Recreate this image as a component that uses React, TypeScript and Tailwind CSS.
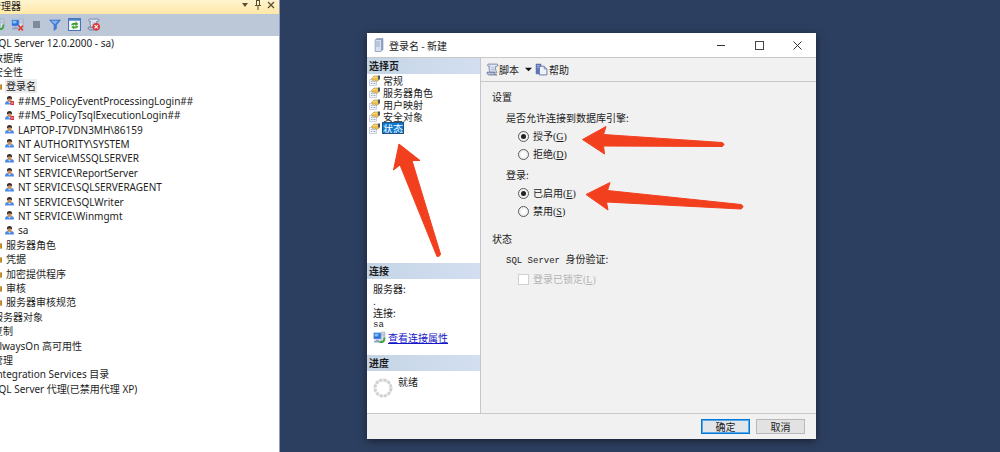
import { useState } from 'react';
import type { ReactNode } from 'react';
import clsx from 'clsx';

type TreeItem = {
  label: string;
  level: 1 | 2 | 3;
  locked?: boolean;
  selected?: boolean;
};

const treeItems: TreeItem[] = [
  { label: 'SQL Server 12.0.2000 - sa)', level: 1 },
  { label: '数据库', level: 1 },
  { label: '安全性', level: 1 },
  { label: '登录名', level: 2, selected: true },
  { label: '##MS_PolicyEventProcessingLogin##', level: 3, locked: true },
  { label: '##MS_PolicyTsqlExecutionLogin##', level: 3, locked: true },
  { label: 'LAPTOP-I7VDN3MH\\86159', level: 3 },
  { label: 'NT AUTHORITY\\SYSTEM', level: 3 },
  { label: 'NT Service\\MSSQLSERVER', level: 3 },
  { label: 'NT SERVICE\\ReportServer', level: 3 },
  { label: 'NT SERVICE\\SQLSERVERAGENT', level: 3 },
  { label: 'NT SERVICE\\SQLWriter', level: 3 },
  { label: 'NT SERVICE\\Winmgmt', level: 3 },
  { label: 'sa', level: 3 },
  { label: '服务器角色', level: 2 },
  { label: '凭据', level: 2 },
  { label: '加密提供程序', level: 2 },
  { label: '审核', level: 2 },
  { label: '服务器审核规范', level: 2 },
  { label: '服务器对象', level: 1 },
  { label: '复制', level: 1 },
  { label: 'AlwaysOn 高可用性', level: 1 },
  { label: '管理', level: 1 },
  { label: 'Integration Services 目录', level: 1 },
  { label: 'SQL Server 代理(已禁用代理 XP)', level: 1 },
];

const pages = ['常规', '服务器角色', '用户映射', '安全对象', '状态'];

function UserIcon({ locked }: { locked?: boolean }) {
  return (
    <svg viewBox="0 0 18 18" className="h-[9px] w-[9px] shrink-0">
      <path d="M0 17c0-5 2-7 5-7h7c4 0 6 2 6 7z" fill="#4a8ae6" />
      <path d="M5 10l4 5 4-5z" fill="#dcebff" />
      <path d="M5 5h8v4c0 2-2 3-4 3s-4-1-4-3z" fill="#c98f5c" />
      <path d="M4 7c-1-5 2-7 5-7s6 2 5 7c-2-3-7-3-10 0z" fill="#3a2a26" />
      {locked && <path d="M11 10h7v8h-7z" fill="#dd3340" />}
      {locked && <path d="M12.500 14h4" stroke="#fff" strokeWidth="1.500" />}
    </svg>
  );
}

function FolderIcon() {
  return (
    <svg viewBox="0 0 16 16" className="h-2 w-2 shrink-0">
      <path d="M0 2h6l2 3h8v10H0z" fill="#a06f14" />
      <path d="M0 6h15v8H0z" fill="#c8942c" />
    </svg>
  );
}

function PageIcon() {
  return (
    <svg viewBox="0 0 22 22" className="h-[11px] w-[11px] shrink-0">
      <path d="M1 9h14v12H1z" fill="#f3f5fb" stroke="#a3abc0" />
      <path d="M4 13h3M9 13h4M4 17h3M9 17h4" stroke="#8593b8" strokeWidth="1.500" />
      <path d="M5 7l5-5h8l2 3v5l-5 3-3-3-5 1z" fill="#ecc04a" stroke="#a67c22" />
      <path d="M8 6l5-2 3 1" fill="none" stroke="#fff0b0" strokeWidth="1.500" />
      <path d="M18 1h4v8h-4z" fill="#4d5a70" />
    </svg>
  );
}

function ServerLinkIcon({ failed }: { failed?: boolean }) {
  return (
    <svg viewBox="0 0 24 24" className="h-[13px] w-[13px] shrink-0">
      <path d="M15 2h7v17h-7z" fill="#dbe2ee" stroke="#8592ab" />
      <path d="M16 6h5M16 9h5" stroke="#8592ab" />
      <path d="M1 3h14v12H1z" fill="#2f6fd4" stroke="#c9d8f2" />
      <path d="M3 5h7v5H3z" fill="#7cc0ff" />
      <path d="M5 16h6v2h3v3H2v-3h3z" fill="#93a4c0" />
      {failed ? (
        <path d="M14 14l8 9M22 14l-8 9" stroke="#e23a26" strokeWidth="3" />
      ) : (
        <path d="M12 20c6 2 9-1 9-8" fill="none" stroke="#3aa53c" strokeWidth="3.500" />
      )}
    </svg>
  );
}

function ScriptIcon({ stop }: { stop?: boolean }) {
  return (
    <svg viewBox="0 0 24 24" className="h-[13px] w-[13px] shrink-0">
      <path d="M5 2h15c3 0 3 4 0 4h-2c-1 5 0 8 2 12H8C6 13 4 9 7 6H5C2 6 2 2 5 2z" fill="#dde5f4" stroke="#6a7896" strokeWidth="1.500" />
      <path d="M2 17h13c0 3 2 5 5 5H6c-3 0-4-2-4-5z" fill="#b4c3de" stroke="#5f6f92" strokeWidth="1.500" />
      <path d="M9 9h7M9 12h7M10 15h7" stroke="#93a3c6" />
      {stop && <circle cx="17" cy="16" r="7" fill="#de3b38" />}
      {stop && <path d="M14 13l6 6M20 13l-6 6" stroke="#fff" strokeWidth="2" />}
    </svg>
  );
}

function IconButton({ label, children }: { label: string; children: ReactNode }) {
  return (
    <button type="button" aria-label={label} className="flex h-4 w-4 items-center justify-center">
      {children}
    </button>
  );
}

function TreeRow({ item }: { item: TreeItem }) {
  return (
    <li
      className={clsx(
        'flex min-h-0 items-center whitespace-nowrap',
        item.level === 1 && '-ml-[7px]',
        item.level === 2 && '-ml-[6px] gap-[3px]',
        item.level === 3 && 'ml-[5px] gap-1'
      )}
    >
      {item.level === 2 && <FolderIcon />}
      {item.level === 3 && <UserIcon locked={item.locked} />}
      <span className={clsx('leading-[14px]', item.level === 2 && 'px-px', item.selected && 'bg-[#ececec]')}>
        {item.label}
      </span>
    </li>
  );
}

function ObjectExplorer() {
  return (
    <aside className="w-[280px] shrink-0 overflow-hidden border-r border-[#8e9bbc] bg-white font-['Noto_Sans','Noto_Sans_CJK_SC',sans-serif] text-[10px] text-[#1e1e1e]">
      <header className="flex h-[14px] items-center justify-between bg-linear-to-b from-[#fff4d0] to-[#ffe8a6] pr-[2px]">
        <h2 className="-ml-[9px] -mt-[3px] leading-[14px]">管理器</h2>
        <div className="-mt-1 flex text-[#5b4f33]">
          <button type="button" aria-label="窗口位置" className="flex h-3 w-[13px] items-center justify-center">
            <svg viewBox="0 0 8 8" className="h-2 w-2"><path d="M1 2h6L4 6z" fill="currentColor" /></svg>
          </button>
          <button type="button" aria-label="自动隐藏" className="flex h-3 w-[13px] items-center justify-center">
            <svg viewBox="0 0 8 10" className="h-[10px] w-2" fill="none" stroke="currentColor">
              <path d="M2.500 0v5.500M5.500 0v5.500M2 .5h4M1 5.500h6M4 6v4" />
            </svg>
          </button>
          <button type="button" aria-label="关闭" className="flex h-3 w-[13px] items-center justify-center">
            <svg viewBox="0 0 8 8" className="h-2 w-2" stroke="currentColor" strokeWidth="1.300"><path d="M1 1l6 6M7 1L1 7" /></svg>
          </button>
        </div>
      </header>
      <div className="flex h-[22px] items-center gap-[3px] bg-[#bcc7d8] pb-px">
        <div className="-ml-[10px] flex">
          <IconButton label="连接"><ServerLinkIcon /></IconButton>
        </div>
        <IconButton label="断开连接"><ServerLinkIcon failed /></IconButton>
        <IconButton label="停止"><span className="h-[7px] w-[7px] bg-[#808997]" /></IconButton>
        <IconButton label="筛选器">
          <svg viewBox="0 0 24 24" className="h-3 w-3">
            <path d="M1 2h22l-8 10v7l-5 4V12z" fill="#3f7de0" stroke="#3566b8" />
            <path d="M4 3.500h14l-6 7z" fill="#86b4f6" />
          </svg>
        </IconButton>
        <IconButton label="刷新">
          <svg viewBox="0 0 24 24" className="h-[13px] w-[13px]">
            <path d="M1 1h22v22H1z" fill="#fbfdff" stroke="#4872b8" strokeWidth="2" />
            <path d="M1 1h22v4H1z" fill="#4b7dcb" />
            <path d="M6 14c0-5 4-6 8-5V6l5 5-5 4v-2c-3-1-5 0-8 1z" fill="#3d9c33" />
            <path d="M19 14c0 5-4 6-8 5v2l-5-4 5-4v2c3 1 5 0 8-1z" fill="#56ad45" />
          </svg>
        </IconButton>
        <IconButton label="脚本错误"><ScriptIcon stop /></IconButton>
      </div>
      <ul className="grid h-[360px] auto-rows-fr">
        {treeItems.map((item) => (
          <TreeRow key={item.label} item={item} />
        ))}
      </ul>
    </aside>
  );
}

function SectionHeader({ children }: { children: ReactNode }) {
  return (
    <h3 className="h-4 shrink-0 bg-linear-to-r from-[#c5d5e6] to-[#d3dff0] pl-[2px] font-bold leading-4">{children}</h3>
  );
}

function Key({ char }: { char: string }) {
  return (
    <span className="font-['Liberation_Serif',serif]">
      (<u>{char}</u>)
    </span>
  );
}

type RadioProps = {
  name: string;
  label: string;
  char: string;
  checked: boolean;
  onChange: () => void;
};

function Radio({ name, label, char, checked, onChange }: RadioProps) {
  return (
    <label className="flex h-[18px] items-center gap-1 pl-[26px]">
      <input
        type="radio"
        name={name}
        checked={checked}
        onChange={onChange}
        className="h-[11px] w-[11px] appearance-none rounded-full border border-[#5a5a5a] bg-white bg-clip-content p-[2px] checked:bg-[#222222]"
      />
      <span>
        {label}
        <Key char={char} />
      </span>
    </label>
  );
}

function PageSidebar({ page, onSelect }: { page: string; onSelect: (page: string) => void }) {
  return (
    <nav className="flex w-[114px] shrink-0 flex-col border-r border-[#c4c8ce] bg-white">
      <SectionHeader>选择页</SectionHeader>
      <ul className="flex-1">
        {pages.map((name) => (
          <li key={name} className="flex h-3 items-center pl-[2px]">
            <PageIcon />
            <button
              type="button"
              onClick={() => onSelect(name)}
              className={clsx(
                'ml-[2px] h-3 px-px leading-[11px]',
                name === page && 'bg-[#0a78d6] text-white outline-1 -outline-offset-1 outline-[#28507c]'
              )}
            >
              {name}
            </button>
          </li>
        ))}
      </ul>
      <SectionHeader>连接</SectionHeader>
      <div className="flex h-[76px] flex-col pl-[6px] pt-1 leading-3">
        <p>服务器:</p>
        <p>.</p>
        <p>连接:</p>
        <p className="font-['Liberation_Mono',monospace] text-[9px]">sa</p>
        <div className="flex items-center gap-[2px]">
          <ServerLinkIcon />
          <a href="#properties" className="text-[#1414c8] underline">
            查看连接属性
          </a>
        </div>
      </div>
      <SectionHeader>进度</SectionHeader>
      <div className="flex h-[42px] items-start gap-[5px] pl-[6px] pt-[5px]">
        <svg viewBox="0 0 20 20" className="mt-[2px] h-5 w-5">
          <circle cx="10" cy="10" r="8" fill="none" stroke="#d2d2d2" strokeWidth="3" strokeDasharray="3.400 .8" />
        </svg>
        <span className="leading-3">就绪</span>
      </div>
    </nav>
  );
}

function Arrows() {
  return (
    <svg viewBox="0 0 449 406" className="pointer-events-none absolute left-0 top-0 h-[406px] w-[449px]" fill="#f2401f" stroke="#f2401f" strokeLinejoin="round">
      <path d="M32 111L53 127.500H45L73.500 221Q73 224 70 223.500L33 132L26.500 137z" />
      <path d="M215.500 106.500L239 93.500L236.500 101.500L355 109.500Q359 111.500 355 113.500L236.500 113L237.500 121z" />
      <path d="M219 161.500L243 149.500L240.500 157.500L374 171.500Q378 173.500 374 176L239.500 169L241 177z" />
    </svg>
  );
}

function LoginDialog() {
  const [page, setPage] = useState('状态');
  const [connect, setConnect] = useState('grant');
  const [login, setLogin] = useState('enabled');

  return (
    <section
      role="dialog"
      aria-label="登录名 - 新建"
      className="relative mb-[13px] ml-[87px] mr-[184px] mt-[33px] flex min-w-0 flex-1 flex-col bg-[#f1f1f1] font-['Noto_Sans_CJK_SC',sans-serif] text-[10px] text-[#1c1c1c] shadow-[0_2px_8px_rgba(0,0,0,0.5)]"
    >
      <header className="flex h-6 shrink-0 items-center bg-white pl-[7px]">
        <svg viewBox="0 0 20 28" className="h-[14px] w-[10px]">
          <path d="M2 4l4-3h12v22l-4 4H2z" fill="#8fa3c4" stroke="#74859f" />
          <path d="M3 4h11v22H3z" fill="#d5e0f0" />
          <path d="M4 8h8M4 12h8M4 16h8" stroke="#8da0c0" strokeWidth="1.500" />
        </svg>
        <h1 className="ml-[5px] flex-1">登录名 - 新建</h1>
        <button type="button" aria-label="最小化" className="flex h-6 w-[38px] items-center justify-center">
          <span className="h-px w-2 bg-[#333333]" />
        </button>
        <button type="button" aria-label="最大化" className="flex h-6 w-[38px] items-center justify-center">
          <span className="h-[9px] w-[9px] border border-[#444444]" />
        </button>
        <button type="button" aria-label="关闭" className="flex h-6 w-[38px] items-center justify-center">
          <svg viewBox="0 0 9 9" className="h-[9px] w-[9px]" stroke="#333333"><path d="M.5.5l8 8M8.500.5l-8 8" /></svg>
        </button>
      </header>

      <div className="flex min-h-0 flex-1 border-y border-[#c8c8c8]">
        <PageSidebar page={page} onSelect={setPage} />
        <main className="flex-1">
          <div className="flex h-6 items-center border-b border-[#c8c8c8] pl-[5px]">
            <button type="button" className="flex items-center">
              <ScriptIcon />
              脚本
              <svg viewBox="0 0 8 8" className="ml-[6px] h-[7px] w-[7px]"><path d="M0 2h8L4 6z" fill="#111" /></svg>
            </button>
            <button type="button" className="ml-[3px] flex items-center gap-px">
              <svg viewBox="0 0 24 24" className="h-[13px] w-[13px]">
                <path d="M2 2h9v18H2z" fill="#5f78c0" stroke="#3f5590" />
                <path d="M4 5h5M4 8h3" stroke="#c6d2f2" strokeWidth="1.500" />
                <path d="M8 6h9l5 5v11H8z" fill="#eef2fb" stroke="#51639a" strokeWidth="1.500" />
                <path d="M17 6v5h5" fill="#b8c6e8" stroke="#51639a" />
              </svg>
              帮助
            </button>
          </div>
          <div className="pl-[11px] pt-[7px] leading-4">
            <h2>设置</h2>
            <fieldset className="mt-[5px]">
              <legend className="mb-px pl-[14px]">是否允许连接到数据库引擎:</legend>
              <Radio name="connect" label="授予" char="G" checked={connect === 'grant'} onChange={() => setConnect('grant')} />
              <Radio name="connect" label="拒绝" char="D" checked={connect === 'deny'} onChange={() => setConnect('deny')} />
            </fieldset>
            <fieldset className="mt-1">
              <legend className="mb-px pl-[14px]">登录:</legend>
              <Radio name="login" label="已启用" char="E" checked={login === 'enabled'} onChange={() => setLogin('enabled')} />
              <Radio name="login" label="禁用" char="S" checked={login === 'disabled'} onChange={() => setLogin('disabled')} />
            </fieldset>
            <h2 className="mt-[11px]">状态</h2>
            <p className="mt-1 pl-[14px]">
              <span className="font-['Liberation_Mono',monospace] text-[9px]">SQL Server </span>
              身份验证:
            </p>
            <label className="mt-px flex h-[18px] items-center gap-1 pl-[26px] text-[#b4b4b4]">
              <input type="checkbox" disabled className="h-[11px] w-[11px] appearance-none border border-[#d0d0d0] bg-white" />
              <span>
                登录已锁定
                <Key char="L" />
              </span>
            </label>
          </div>
        </main>
      </div>

      <footer className="flex h-[25px] shrink-0 items-center justify-end gap-[6px] pr-[11px]">
        <button type="button" className="h-[15px] w-[49px] border border-[#0078d7] bg-[#e3e6e9] leading-3 outline-1 -outline-offset-2 outline-[#5aa9e6]">
          确定
        </button>
        <button type="button" className="h-[15px] w-[49px] border border-[#b8b8b8] bg-[#e2e2e2] leading-3">
          取消
        </button>
      </footer>
      <Arrows />
    </section>
  );
}

export default function App() {
  return (
    <div className="flex h-screen overflow-hidden bg-[#2d3f60]">
      <ObjectExplorer />
      <LoginDialog />
    </div>
  );
}
